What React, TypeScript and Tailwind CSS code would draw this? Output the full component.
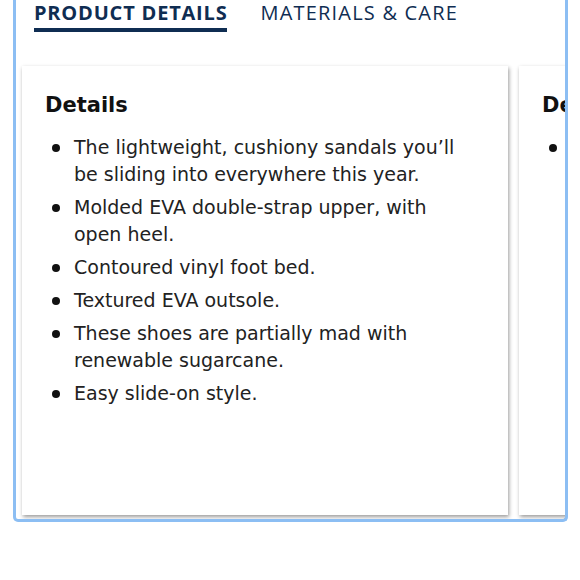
const details = [
  'The lightweight, cushiony sandals you’ll be sliding into everywhere this year.',
  'Molded EVA double-strap upper, with open heel.',
  'Contoured vinyl foot bed.',
  'Textured EVA outsole.',
  'These shoes are partially mad with renewable sugarcane.',
  'Easy slide-on style.',
]

const description = ['Heel height: 1 in.']

function InfoCard({ title, items }: { title: string; items: string[] }) {
  return (
    <div className="h-[449px] w-[486px] shrink-0 bg-white px-[23px] pt-[26px] shadow-[1px_2px_4px_rgba(0,0,0,0.4)]">
      <h3 className="text-[21px] leading-[26px] font-bold text-[#111]">{title}</h3>
      <ul className="mt-[16px] space-y-[6px]">
        {items.map((item) => (
          <li className="flex text-[19px] leading-[27px] text-[#222]" key={item}>
            <span className="flex w-[29px] shrink-0 pt-[10px] pl-[7px]">
              <span className="size-[8px] rounded-full bg-[#111]" />
            </span>
            <span className="w-[392px]">{item}</span>
          </li>
        ))}
      </ul>
    </div>
  )
}

export default function App() {
  return (
    <div className="h-[580px] w-[580px] bg-white pl-[13px] font-['DejaVu_Sans',sans-serif]">
      <div className="w-[555px] overflow-hidden rounded-b-[5px] border-x-[3px] border-b-[3px] border-[#8cbef3] pb-[4px]">
        <div className="flex gap-[33px] pl-[18px] font-['Open_Sans',sans-serif] text-[#0f2d52]">
          <div className="border-b-[4px] border-[#0f2d52] pb-[2px] text-[20px] leading-[26px] font-bold tracking-[0.8px]">
            PRODUCT DETAILS
          </div>
          <div className="text-[20px] leading-[26px] tracking-[1.2px]">MATERIALS &amp; CARE</div>
        </div>
        <div className="mt-[34px] flex gap-[11px] pl-[6px]">
          <InfoCard items={details} title="Details" />
          <InfoCard items={description} title="Description" />
        </div>
      </div>
    </div>
  )
}
